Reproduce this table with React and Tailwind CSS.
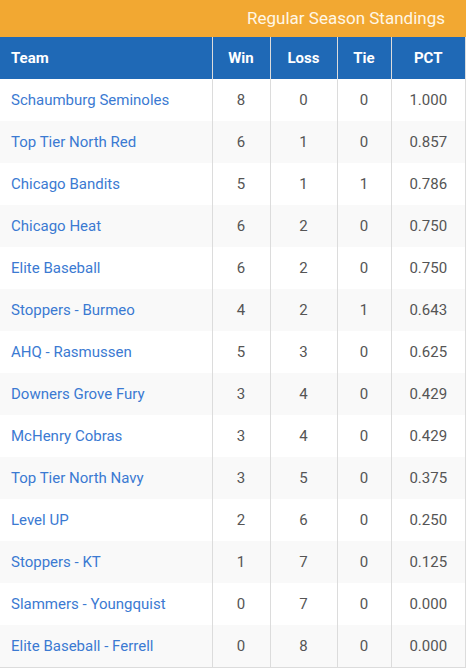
import React from 'react';

const standings = [
  ['Schaumburg Seminoles', 8, 0, 0, '1.000'],
  ['Top Tier North Red', 6, 1, 0, '0.857'],
  ['Chicago Bandits', 5, 1, 1, '0.786'],
  ['Chicago Heat', 6, 2, 0, '0.750'],
  ['Elite Baseball', 6, 2, 0, '0.750'],
  ['Stoppers - Burmeo', 4, 2, 1, '0.643'],
  ['AHQ - Rasmussen', 5, 3, 0, '0.625'],
  ['Downers Grove Fury', 3, 4, 0, '0.429'],
  ['McHenry Cobras', 3, 4, 0, '0.429'],
  ['Top Tier North Navy', 3, 5, 0, '0.375'],
  ['Level UP', 2, 6, 0, '0.250'],
  ['Stoppers - KT', 1, 7, 0, '0.125'],
  ['Slammers - Youngquist', 0, 7, 0, '0.000'],
  ['Elite Baseball - Ferrell', 0, 8, 0, '0.000'],
];

const App = () => {
  return (
    <div className="w-[466px] bg-white" style={{ fontFamily: 'Roboto, "Liberation Sans", sans-serif' }}>
      {/* Title bar */}
      <div className="h-[37px] bg-[#f2a832] flex items-center justify-end pr-[21px]">
        <span className="text-[17px] text-[#fff7e6] pt-[1px]">Regular Season Standings</span>
      </div>

      <table className="w-[466px] border-collapse table-fixed border-r border-b border-[#dcdcdc]">
        <colgroup>
          <col className="w-[212px]" />
          <col className="w-[58px]" />
          <col className="w-[67px]" />
          <col className="w-[54px]" />
          <col />
        </colgroup>
        <thead>
          <tr className="h-[42px] bg-[#1f69b6] text-white text-[15px] font-bold">
            <th className="text-left pl-[11px] pt-[1px]">Team</th>
            <th className="border-l border-[#dcdcdc] text-center pt-[1px]">Win</th>
            <th className="border-l border-[#dcdcdc] text-center pt-[1px]">Loss</th>
            <th className="border-l border-[#dcdcdc] text-center pt-[1px]">Tie</th>
            <th className="border-l border-[#dcdcdc] text-center pt-[1px]">PCT</th>
          </tr>
        </thead>
        <tbody>
          {standings.map(([team, w, l, t, pct], i) => (
            <tr key={team} className={`h-[42px] text-[15px] ${i % 2 === 1 ? 'bg-[#f9f9f9]' : 'bg-white'}`}>
              <td className="pl-[11px] pt-[1px] text-[#3b7ad2]">{team}</td>
              <td className="border-l border-[#dcdcdc] pt-[1px] text-center text-[#555555]">{w}</td>
              <td className="border-l border-[#dcdcdc] pt-[1px] text-center text-[#555555]">{l}</td>
              <td className="border-l border-[#dcdcdc] pt-[1px] text-center text-[#555555]">{t}</td>
              <td className="border-l border-[#dcdcdc] pt-[1px] text-center text-[#555555]">{pct}</td>
            </tr>
          ))}
        </tbody>
      </table>
    </div>
  );
};

export default App;
